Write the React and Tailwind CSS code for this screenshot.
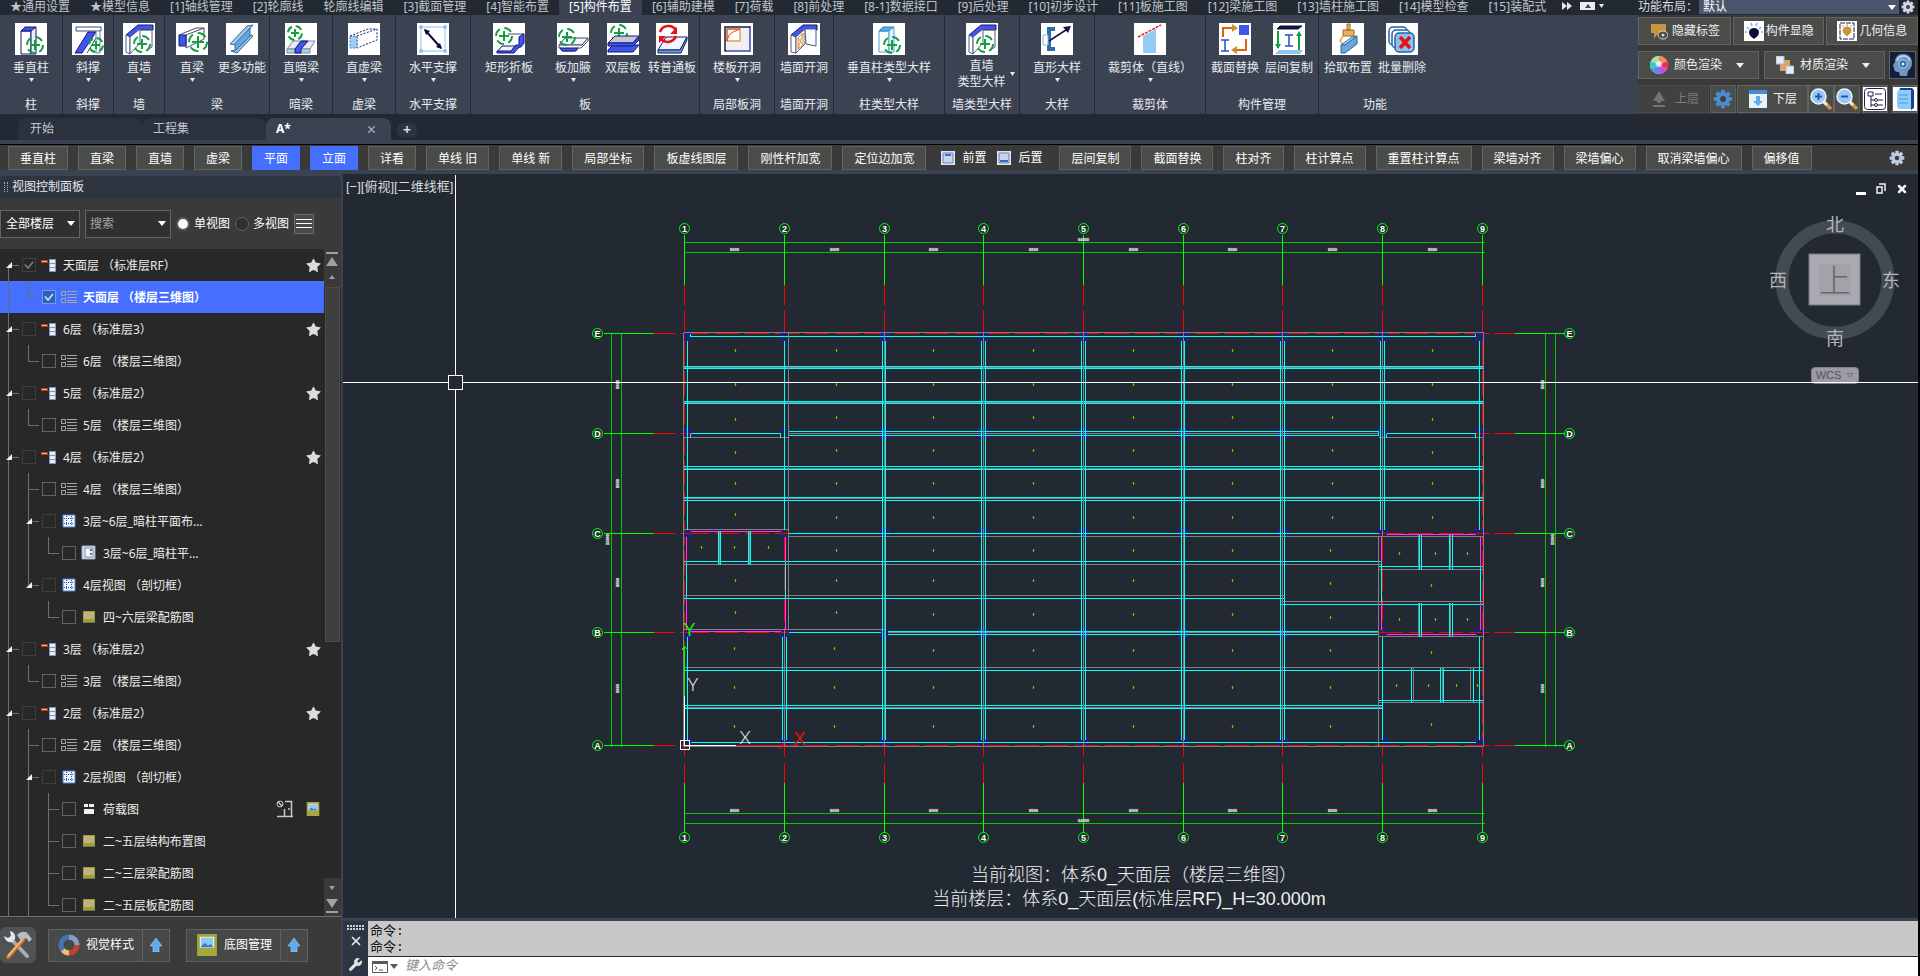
import React, { useState } from 'react';
import { Star, Wrench, X } from 'lucide-react';

/* ---------- ribbon icons (32 x 32) ---------- */

const Target = ({ x, y, r = 8 }) => (
  <g stroke="#12a03c" strokeWidth="2" fill="none">
    <circle cx={x} cy={y} r={r} strokeDasharray={`${r} ${r * 0.57}`} strokeDashoffset={r * 0.5 - 4} />
    <path d={`M${x - r + 3} ${y}H${x + r - 3}M${x} ${y - r + 3}V${y + r - 3}`} />
  </g>
);

const navy = '#14186e';
const blue = '#3f55f0';

const ICONS = {
  column: (
    <>
      <path d="M6 8h10v23H6z" fill="#fff" stroke={navy} />
      <path d="M6 8l4-4h11l-5 4z" fill={blue} stroke={navy} />
      <path d="M16 8l5-4v27h-5z" fill="#eef" stroke={navy} />
      <Target x={20} y={22} />
    </>
  ),
  brace: (
    <>
      <path d="M4 4h25v4H4z" fill="#fff" stroke="#444a70" />
      <path d="M16 9h8L10 30H3z" fill={blue} stroke={navy} />
      <path d="M24 9l3 1-12 20" fill="none" stroke="#444a70" />
      <path d="M24 8h4v22h-4z" fill="#f4f4ff" stroke="#8088a0" />
      <Target x={24} y={22} r={7} />
    </>
  ),
  wall: (
    <>
      <path d="M3 12L15 2h15v5H17L7 14z" fill={blue} stroke={navy} />
      <path d="M3 12l4 2v17l-4-2z" fill="#fff" stroke="#555c80" />
      <path d="M7 14L17 6v14L7 31z" fill="#fafaff" stroke="#555c80" />
      <path d="M17 6h12v18l-6 4" fill="none" stroke="#555c80" />
      <Target x={19} y={21} />
    </>
  ),
  beam: (
    <>
      <path d="M10 12L28 5v11l-18 9z" fill="#fff" stroke="#444a70" />
      <path d="M3 12h7v11H3z" fill={blue} stroke={navy} />
      <path d="M3 12L20 5h8" fill="none" stroke="#444a70" />
      <Target x={22} y={19} r={9} />
    </>
  ),
  more: (
    <>
      <path d="M4 21L21 3l6-1-17 20z" fill="#9cc8ee" stroke="#2f6ca0" />
      <path d="M9 21L24 5v9L9 28z" fill="#6aa6de" stroke="#2f6ca0" />
      <path d="M5 28l5-1 15-15 2 1-16 17z" fill="#8fc0ea" stroke="#2f6ca0" />
    </>
  ),
  hiddenBeam: (
    <>
      <path d="M2 26l6-8h22l-5 8z" fill="#e8eaf4" stroke="#8088a0" />
      <path d="M2 26h23v4H2z" fill="#a8d8e8" stroke="#8088a0" />
      <path d="M10 26l6-8h7l-7 8v4h-6z" fill={blue} stroke={navy} />
      <Target x={10} y={10} r={7} />
    </>
  ),
  virtualBeam: (
    <g stroke={navy} strokeDasharray="2 1.5">
      <path d="M9 13L29 6v11L9 25z" fill="#fff" />
      <path d="M2 13h7v12H2z" fill="#9cd0f6" stroke="#2f7cc0" />
      <path d="M2 13L20 6h9" fill="none" />
    </g>
  ),
  cross: (
    <>
      <path d="M4 4h24v24H4z" fill="none" stroke="#8cc4ee" />
      <g fill="#8cc4ee">
        <circle cx="4" cy="4" r="2" /><circle cx="28" cy="4" r="2" />
        <circle cx="4" cy="28" r="2" /><circle cx="28" cy="28" r="2" />
      </g>
      <path d="M8 7l16 18" stroke="#0a0a30" strokeWidth="2" />
      <path d="M7 6l6 2-4 4zM25 26l-6-2 4-4z" fill="#0a0a30" />
    </>
  ),
  foldSlab: (
    <>
      <path d="M15 11h16l-3 4v8l-4 3" fill="#fff" stroke="#444a70" />
      <path d="M9 23h13l-4 6H4z" fill="#eef0fa" stroke={navy} />
      <path d="M31 11v9l-3 4h-2l-5 6H4v-2h14l5-6h3v-8l4-3z" fill={blue} stroke={navy} />
      <Target x={11} y={13} />
    </>
  ),
  haunch: (
    <>
      <path d="M2 22l6-7h23l-6 7z" fill="#f4f6fc" stroke="#444a70" />
      <path d="M2 22h23l6-7v3l-7 7h-4l-3 3H6l-2-3H2z" fill="#fff" stroke="#444a70" />
      <path d="M3 25h18l-2 3H5z" fill={blue} stroke={navy} />
      <Target x={10} y={14} />
    </>
  ),
  doubleSlab: (
    <>
      <Target x={12} y={10} />
      <path d="M1 27l5-5h26l-6 7H1z" fill={blue} stroke={navy} />
      <path d="M1 20l7-7h24l-6 7z" fill="#c4c8d4" stroke={navy} />
      <path d="M1 20h25l6-7v4l-6 6H1z" fill={blue} stroke={navy} />
    </>
  ),
  convert: (
    <>
      <path d="M2 27l8-13h21l-7 13z" fill="#f4f6ff" stroke={navy} />
      <path d="M2 27h22l7-13v3l-6 13H2z" fill="#6aa6de" stroke={navy} />
      <path d="M4 9a9 9 0 0 1 16-2M20 13a9 9 0 0 1-15 3" fill="none" stroke="#e81010" strokeWidth="2.5" />
      <path d="M21 4v7h-7zM3 20v-7h7z" fill="#e81010" />
    </>
  ),
  slabHole: (
    <>
      <path d="M4 4h25v24H4z" fill="#f0f0f0" stroke="#1a1c48" strokeWidth="1.5" />
      <path d="M5 28h24V5" fill="none" stroke="#6c70c0" strokeWidth="2" />
      <path d="M6 6h13v12H6z" fill="#fff" stroke="#e0a060" strokeWidth="1.5" />
      <path d="M6 18V6h13l-7 3-4 3z" fill="none" stroke="#e05020" />
    </>
  ),
  wallHole: (
    <>
      <path d="M3 12L15 2h14v5H17L8 14z" fill={blue} stroke={navy} />
      <path d="M3 12l5 2v16l-5-1z" fill="#fff" stroke="#555c80" />
      <path d="M8 14L17 6v15L8 30z" fill="#fff" stroke="#555c80" />
      <path d="M10 15l5-5v12l-5 4zM10 15l5 7M15 10l-5 16" fill="none" stroke="#d89040" />
      <path d="M17 6h11v17l-10-2z" fill="#fafaff" stroke="#555c80" />
    </>
  ),
  columnType: (
    <>
      <path d="M6 8h10v21H6z" fill="#fff" stroke="#50a0d0" />
      <path d="M6 8l4-4h11l-5 4z" fill="#50b0e8" stroke="#3080b0" />
      <path d="M16 8l5-4v25h-5z" fill="#e4f2fc" stroke="#50a0d0" />
      <Target x={19} y={22} />
    </>
  ),
  straight: (
    <>
      <path d="M14 4H6v24h8v-4h-4V8h4z" fill="#2c6ca8" />
      <path d="M2 12h5v10H2z" fill="#fff" stroke="#8cb8dc" />
      <path d="M8 18L28 5" stroke="#14143c" strokeWidth="1.5" />
      <path d="M30 3l-8 1 5 6z" fill="#14143c" />
    </>
  ),
  clip: (
    <>
      <path d="M9 13L22 6v24H9z" fill="#94ccf4" />
      <path d="M4 14L27 2" stroke="#e02020" strokeWidth="1.5" strokeDasharray="3 1" />
    </>
  ),
  replace: (
    <>
      <path d="M4 14V5h10" fill="none" stroke="#e06010" strokeWidth="2" />
      <path d="M13 1l6 4-6 4z" fill="#c89030" />
      <path d="M20 2h10v10H20z" fill={blue} />
      <path d="M2 17h8M2 28h8M6 17v11" stroke="#2050d0" strokeWidth="1.5" />
      <path d="M27 16v11H17" fill="none" stroke="#e06010" strokeWidth="2" />
      <path d="M18 23l-6 4 6 4z" fill="#c89030" />
    </>
  ),
  floorCopy: (
    <>
      <path d="M4 6l3-3h22l-4 3z" fill="#10143c" stroke="#10143c" />
      <path d="M2 31l4-4h24l-3 4z" fill="#8cc8f0" />
      <path d="M5 8v17M26 10v17" stroke="#12a03c" strokeWidth="2" />
      <path d="M2 21h6l-3 5zM23 13h6l-3-5z" fill="#12a03c" />
      <path d="M12 12h8M12 23h8M16 12v11" stroke="#2050d0" strokeWidth="1.5" />
    </>
  ),
  pick: (
    <>
      <path d="M15 1h3v6h-3zM11 7h11v6H11z" fill="#e8b060" stroke="#a06c18" />
      <path d="M11 13l-3 5 4 4M22 13l3 6-4 3" fill="none" stroke="#e8a848" strokeWidth="1.5" />
      <path d="M9 22l11-8 5-1-12 9z" fill="#b4d8f4" stroke="#2f6ca0" />
      <path d="M9 22h4l12-9v8l-12 9H9z" fill="#6aa6de" stroke="#2f6ca0" />
    </>
  ),
  batchDelete: (
    <g fill="#fff" stroke="#2464a4" strokeWidth="1.5">
      <rect x="3" y="4" width="18" height="18" rx="4" />
      <rect x="6" y="7" width="18" height="18" rx="4" />
      <rect x="9" y="10" width="19" height="19" rx="4" fill="#8cc0ee" />
      <path d="M14 14l10 11M24 14L14 25" stroke="#e81010" strokeWidth="3.5" />
    </g>
  ),
};

const RibbonIcon = ({ name }) => (
  <svg viewBox="0 0 32 32" className="w-8 h-8 bg-white">{ICONS[name]}</svg>
);

const Caret = ({ className = 'w-[5px] h-[4px]' }) => (
  <svg viewBox="0 0 10 6" preserveAspectRatio="none" className={className}>
    <path d="M0 0h10L5 6z" fill="currentColor" />
  </svg>
);

/* ---------- data ---------- */

const ribbonTabs = [
  '★通用设置', '★模型信息', '[1]轴线管理', '[2]轮廓线', '轮廓线编辑', '[3]截面管理', '[4]智能布置',
  '[5]构件布置', '[6]辅助建模', '[7]荷载', '[8]前处理', '[8-1]数据接口', '[9]后处理', '[10]初步设计',
  '[11]板施工图', '[12]梁施工图', '[13]墙柱施工图', '[14]模型检查', '[15]装配式',
];

const ribbonGroups = [
  { title: '柱', w: 'w-[63px]', items: [['column', '垂直柱', 'w-[60px]', true]] },
  { title: '斜撑', w: 'w-[51px]', items: [['brace', '斜撑', 'w-[50px]', true]] },
  { title: '墙', w: 'w-[51px]', items: [['wall', '直墙', 'w-[50px]', true]] },
  { title: '梁', w: 'w-[105px]', items: [['beam', '直梁', 'w-[50px]', true], ['more', '更多功能', 'w-[50px]', false]] },
  { title: '暗梁', w: 'w-[63px]', items: [['hiddenBeam', '直暗梁', 'w-[60px]', true]] },
  { title: '虚梁', w: 'w-[63px]', items: [['virtualBeam', '直虚梁', 'w-[60px]', true]] },
  { title: '水平支撑', w: 'w-[75px]', items: [['cross', '水平支撑', 'w-[70px]', true]] },
  {
    title: '板',
    w: 'w-[229px]',
    items: [
      ['foldSlab', '矩形折板', 'w-[74px]', true],
      ['haunch', '板加腋', 'w-[54px]', true],
      ['doubleSlab', '双层板', 'w-[46px]', false],
      ['convert', '转普通板', 'w-[52px]', false],
    ],
  },
  { title: '局部板洞', w: 'w-[75px]', items: [['slabHole', '楼板开洞', 'w-[70px]', true]] },
  { title: '墙面开洞', w: 'w-[59px]', items: [['wallHole', '墙面开洞', 'w-[54px]', false]] },
  { title: '柱类型大样', w: 'w-[111px]', items: [['columnType', '垂直柱类型大样', 'w-[100px]', true]] },
  { title: '墙类型大样', w: 'w-[75px]', items: [['wall', '直墙', 'w-[70px]', true, '类型大样']] },
  { title: '大样', w: 'w-[75px]', items: [['straight', '直形大样', 'w-[70px]', true]] },
  { title: '裁剪体', w: 'w-[111px]', items: [['clip', '裁剪体（直线）', 'w-[100px]', true]] },
  { title: '构件管理', w: 'w-[113px]', items: [['replace', '截面替换', 'w-[54px]', false], ['floorCopy', '层间复制', 'w-[54px]', false]] },
  { title: '功能', w: 'w-[112px]', last: true, items: [['pick', '拾取布置', 'w-[54px]', false], ['batchDelete', '批量删除', 'w-[54px]', false]] },
];

const quickLeft = [
  '垂直柱', '直梁', '直墙', '虚梁', '平面', '立面', '详看', '单线 旧', '单线 新', '局部坐标',
  '板虚线图层', '刚性杆加宽', '定位边加宽',
];
const quickRight = [
  '层间复制', '截面替换', '柱对齐', '柱计算点', '重置柱计算点', '梁墙对齐', '梁墙偏心', '取消梁墙偏心', '偏移值',
];

// cells: how the guide lines run in each 20px indent column
const treeRows = [
  { cells: ['start'], open: true, icon: 'floor', text: '天面层 （标准层RF）', dim: true, checked: true, star: true },
  { cells: ['pass', 'end'], icon: 'list', text: '天面层 （楼层三维图）', checked: true, selected: true },
  { cells: ['tee'], open: true, icon: 'floor', text: '6层 （标准层3）', dim: true, star: true },
  { cells: ['pass', 'end'], icon: 'list', text: '6层 （楼层三维图）' },
  { cells: ['tee'], open: true, icon: 'floor', text: '5层 （标准层2）', dim: true, star: true },
  { cells: ['pass', 'end'], icon: 'list', text: '5层 （楼层三维图）' },
  { cells: ['tee'], open: true, icon: 'floor', text: '4层 （标准层2）', dim: true, star: true },
  { cells: ['pass', 'tee'], icon: 'list', text: '4层 （楼层三维图）' },
  { cells: ['pass', 'tee'], open: true, icon: 'grid', text: '3层~6层_暗柱平面布...', dim: true },
  { cells: ['pass', 'pass', 'end'], icon: 'plan', text: '3层~6层_暗柱平...' },
  { cells: ['pass', 'end'], open: true, icon: 'grid', text: '4层视图 （剖切框）', dim: true },
  { cells: ['pass', 'none', 'end'], icon: 'image', text: '四~六层梁配筋图' },
  { cells: ['tee'], open: true, icon: 'floor', text: '3层 （标准层2）', dim: true, star: true },
  { cells: ['pass', 'end'], icon: 'list', text: '3层 （楼层三维图）' },
  { cells: ['tee'], open: true, icon: 'floor', text: '2层 （标准层2）', dim: true, star: true },
  { cells: ['pass', 'tee'], icon: 'list', text: '2层 （楼层三维图）' },
  { cells: ['pass', 'tee'], open: true, icon: 'grid', text: '2层视图 （剖切框）', dim: true },
  { cells: ['pass', 'pass', 'tee'], icon: 'load', text: '荷载图', tools: true },
  { cells: ['pass', 'pass', 'tee'], icon: 'image', text: '二~五层结构布置图' },
  { cells: ['pass', 'pass', 'tee'], icon: 'image', text: '二~三层梁配筋图' },
  { cells: ['pass', 'pass', 'end'], icon: 'image', text: '二~五层板配筋图' },
];

/* ---------- header ---------- */

const RibbonItem = ({ item }) => {
  const [icon, label, width, caret, second] = item;
  return (
    <button className={`${width} flex flex-col items-center text-[#e8eaee] whitespace-nowrap`}>
      <RibbonIcon name={icon} />
      {second ? (
        <span className="flex items-center gap-1 pl-2 leading-4 pt-[3px]">
          <span className="flex flex-col items-center">
            <span>{label}</span>
            <span>{second}</span>
          </span>
          <Caret />
        </span>
      ) : (
        <>
          <span className="leading-4 mt-[5px]">{label}</span>
          {caret && <Caret className="w-[5px] h-[4px] mt-[2px]" />}
        </>
      )}
    </button>
  );
};

const Ribbon = () => (
  <div className="flex-1 min-w-0 flex flex-col">
    <nav className="h-[15px] flex items-start">
      {ribbonTabs.map((tab) => (
        <button
          key={tab}
          className={`h-[15px] px-[10px] leading-[14px] flex items-start whitespace-nowrap ${
            tab.startsWith('[5]') ? 'bg-[#3b4353] text-white' : 'text-[#c0c4ca]'
          }`}
        >
          {tab}
        </button>
      ))}
      <div className="flex items-center gap-2 h-3 pl-[6px]">
        <svg viewBox="0 0 10 8" className="w-[10px] h-2"><path d="M0 0l5 4-5 4zM5 0l5 4-5 4z" fill="#e8e8e8" /></svg>
        <button aria-label="折叠功能区" className="w-[15px] h-2 bg-[#ececec] flex items-center justify-center">
          <svg viewBox="0 0 6 4" className="w-[6px] h-1"><path d="M0 4h6L3 0z" fill="#444" /></svg>
        </button>
        <span className="text-[#e8e8e8] flex -ml-1"><Caret /></span>
      </div>
    </nav>
    <div className="flex-1 flex bg-[#3b4353]">
      {ribbonGroups.map((g) => (
        <section key={g.title} className={`${g.w} flex flex-col py-px ${g.last ? '' : 'border-r border-[#232a35]'}`}>
          <div className="flex-1 flex justify-center items-start pt-[7px]">
            {g.items.map((item) => <RibbonItem key={item[1]} item={item} />)}
          </div>
          <h2 className="text-center leading-4 text-[#e8eaee]">{g.title}</h2>
        </section>
      ))}
    </div>
  </div>
);

const panelButton = 'h-7 border border-[#626462] bg-[#4b4d4b] text-[#f0f0f0] flex items-center whitespace-nowrap';

const GearIcon = ({ className }) => (
  <svg viewBox="0 0 24 24" className={className}>
    <g fill="currentColor">
      {[0, 45, 90, 135].map((a) => (
        <rect key={a} x="9.5" y="1" width="5" height="22" rx="1" transform={`rotate(${a} 12 12)`} />
      ))}
      <circle cx="12" cy="12" r="8" />
    </g>
    <circle cx="12" cy="12" r="3.5" fill="#3c3e42" />
  </svg>
);

const Magnifier = ({ minus }) => (
  <svg viewBox="0 0 24 24" className="w-6 h-6">
    <path d="M15 15l7 7" stroke="#d89040" strokeWidth="3.5" />
    <path d="M14 14l4 4" stroke="#e8e8e8" strokeWidth="3" />
    <circle cx="9.5" cy="9.5" r="7.5" fill="#9cc8f4" stroke="#eef4fa" strokeWidth="1.5" />
    <path d={minus ? 'M6 9.5h7' : 'M6 9.5h7M9.5 6v7'} stroke="#1c5cb0" strokeWidth="2" />
  </svg>
);

const SidePanel = () => (
  <div className="w-[280px] shrink-0 flex flex-col bg-[#3a3a3a]">
    <div className="h-[15px] bg-[#222933] flex">
      <label htmlFor="layout" className="leading-[14px] text-[#d8dade] w-[61px] whitespace-nowrap">功能布局：</label>
      <div className="grid w-[200px] h-[14px] bg-[#4a566c] items-center">
        <select id="layout" className="appearance-none col-start-1 row-start-1 w-full h-[14px] leading-[14px] pl-1 text-white">
          <option>默认</option>
        </select>
        <span className="col-start-1 row-start-1 justify-self-end pr-[3px] text-white pointer-events-none">
          <Caret className="w-2 h-[5px]" />
        </span>
      </div>
      <GearIcon className="w-[14px] h-[14px] ml-[2px] text-[#d0d8e8]" />
    </div>
    <div className="flex flex-col gap-[6px] pt-[2px]">
      <div className="flex gap-[2px]">
        <button className={`${panelButton} flex-1 pl-[11px] gap-1`}>
          <svg viewBox="0 0 18 18" className="w-[18px] h-[18px]">
            <path d="M1 2h15v9H8l-4 6v-6H1z" fill="#c8963c" />
            <ellipse cx="13" cy="13" rx="5" ry="4" fill="#4b4d4b" stroke="#d8d8d8" />
            <circle cx="13" cy="13" r="1.5" fill="#d8d8d8" />
          </svg>
          隐藏标签
        </button>
        <button className={`${panelButton} flex-1 pl-[10px] gap-[2px]`}>
          <svg viewBox="0 0 20 20" className="w-5 h-5 bg-white">
            <path d="M10 18c-2-2-5-3-5-7a5 4 0 0 1 10 0c0 4-3 5-5 7z" fill="#0c0c34" />
            <path d="M3 6l2 2M7 2l1 3M13 2l-1 3M17 6l-2 2M1 11h2M17 11h2" stroke="#78b8e8" strokeWidth="1.5" />
          </svg>
          构件显隐
        </button>
        <button className={`${panelButton} flex-1 pl-[10px] gap-[2px]`}>
          <svg viewBox="0 0 20 20" className="w-5 h-5 bg-white">
            <path d="M3 2h14v16H3z" fill="none" stroke="#202048" strokeDasharray="5 1" />
            <path d="M10 15c-2-2-4-3-4-6a4 3 0 0 1 8 0c0 3-2 4-4 6zM5 4l2 2M10 3v3M15 4l-2 2" fill="#c8963c" stroke="#c8963c" />
          </svg>
          几何信息
        </button>
      </div>
      <div className="flex">
        <button className={`${panelButton} w-[121px] pl-[11px]`}>
          <svg viewBox="0 0 18 18" className="w-[18px] h-[18px] mr-[6px]">
            <circle cx="9" cy="9" r="9" fill="#f0f0f0" />
            <path d="M9 9V0a9 9 0 0 1 8 5z" fill="#f08858" /><path d="M9 9l8-4a9 9 0 0 1 0 8z" fill="#f02c50" />
            <path d="M9 9l8 4a9 9 0 0 1-8 5z" fill="#c050e0" /><path d="M9 9v9a9 9 0 0 1-8-5z" fill="#5090f0" />
            <path d="M9 9l-8 4a9 9 0 0 1 0-8z" fill="#38c8c0" /><path d="M9 9L1 5a9 9 0 0 1 8-5z" fill="#a8e0a0" />
            <circle cx="9" cy="8" r="3" fill="#fff" opacity=".7" />
          </svg>
          颜色渲染
          <Caret className="w-2 h-[5px] ml-[14px]" />
        </button>
        <button className={`${panelButton} w-[121px] ml-[5px] pl-[11px]`}>
          <svg viewBox="0 0 18 18" className="w-[18px] h-[18px] mr-[6px]">
            <path d="M4 4h10v11H4z" fill="#e0a45c" /><path d="M0 0h8v8H0zM10 10h8v8h-8z" fill="#e4ecf8" stroke="#a8b8d0" />
          </svg>
          材质渲染
          <Caret className="w-2 h-[5px] ml-[14px]" />
        </button>
        <button aria-label="视觉" className="ml-1 w-[27px] h-7 border border-[#626462] bg-[#141e3c] flex items-center justify-center">
          <svg viewBox="0 0 24 24" className="w-6 h-6">
            <path d="M12 1c6 0 9 4 9 9s-3 7-4 8l-1 5H9l-1-4c-3 0-5-1-5-4l-1-3 2-3c0-5 3-8 8-8z" fill="#7498bc" />
            <path d="M6 8c1-4 4-5 7-5s5 2 6 5" fill="none" stroke="#c4dcf0" strokeWidth="1.5" />
            <circle cx="12" cy="11" r="4" fill="#2c64a8" stroke="#8cc0e8" strokeWidth="1.5" />
            <circle cx="12" cy="11" r="1.5" fill="#d8f0ff" />
          </svg>
        </button>
      </div>
      <div className="flex">
        <button disabled className="w-[71px] h-7 border border-[#484848] bg-[#414141] text-[#7c7c7c] flex items-center pl-[14px] gap-[10px]">
          <svg viewBox="0 0 12 16" className="w-3 h-4">
            <path d="M6 0l6 10H8v2H4v-2H0zM0 14h12v2H0z" fill="#70747a" />
          </svg>
          上层
        </button>
        <button aria-label="设置" className="w-[26px] h-7 ml-px border border-[#5c5c5c] bg-[#4b4d4b] flex items-center justify-center">
          <GearIcon className="w-5 h-5 text-[#4c8ccc]" />
        </button>
        <button className={`${panelButton} w-[71px] ml-px pl-[11px] gap-[6px]`}>
          <svg viewBox="0 0 18 18" className="w-[18px] h-[18px]">
            <path d="M0 0h18v18H0z" fill="#e8f0f8" /><path d="M0 0h18v4H0z" fill="#4c8ccc" />
            <path d="M7 6h4v5h3l-5 5-5-5h3z" fill="#5cacec" />
          </svg>
          下层
        </button>
        <button aria-label="放大" className={`${panelButton} w-[26px] justify-center`}><Magnifier /></button>
        <button aria-label="缩小" className={`${panelButton} w-[26px] justify-center`}><Magnifier minus /></button>
        <button aria-label="列表" className={`${panelButton} w-[26px] ml-[2px] justify-center`}>
          <svg viewBox="0 0 24 24" className="w-6 h-6 bg-white">
            <rect x="1.5" y="1.5" width="21" height="21" rx="3" fill="none" stroke="#202048" />
            <path d="M5 5h5v4H5zM12 7h7M8 9v11M8 13h4M8 18h3M15 13h5M15 18h5" fill="none" stroke="#202048" />
            <circle cx="13" cy="13" r="1.5" fill="none" stroke="#202048" /><circle cx="13" cy="18" r="1.5" fill="none" stroke="#202048" />
          </svg>
        </button>
        <button aria-label="文档" className={`${panelButton} w-[26px] ml-1 justify-center`}>
          <svg viewBox="0 0 24 24" className="w-6 h-6 bg-white">
            <path d="M7 1h12l2 2v18l-3 2V4H6z" fill="#1c3c9c" />
            <path d="M6 3h12v19H6l-2-2V5z" fill="#8cccf8" />
            <path d="M6 8h9M6 12h9M6 16h9" stroke="#4c98d8" />
          </svg>
        </button>
      </div>
    </div>
  </div>
);

const FileTabs = () => (
  <div className="h-[26px] flex items-end pl-[18px] text-[#c4c8ce] shrink-0">
    <button className="w-[124px] h-[22px] rounded-t-[8px] bg-[#2b323e] pl-3 text-left">开始</button>
    <button className="w-[124px] h-[22px] rounded-t-[8px] bg-[#2b323e] pl-[11px] text-left">工程集</button>
    <div className="w-[125px] h-[22px] rounded-t-[8px] bg-[#3b4353] pl-[10px] pr-[14px] flex items-center justify-between">
      <button className="font-bold text-white">A*</button>
      <button aria-label="关闭"><X size={11} strokeWidth={3} className="text-[#a8acb4]" /></button>
    </div>
    <button aria-label="新建" className="ml-[6px] mb-[3px] w-[20px] h-[14px] rounded-md bg-[#2e3541] text-[#d8dade] font-bold text-sm leading-[14px]">+</button>
  </div>
);

const QuickButton = ({ label }) => (
  <button
    className={`h-6 px-[11px] pt-px border whitespace-nowrap text-white ${
      label === '平面' || label === '立面' ? 'bg-[#456fff] border-[#456fff]' : 'bg-[#4a4c4a] border-[#626462]'
    }`}
  >
    {label}
  </button>
);

const LayerIcon = ({ back }) => (
  <svg viewBox="0 0 16 16" className="w-4 h-4">
    <path d="M1 1h14v14H1z" fill="#dfe6f4" /><path d="M3 3h10v10H3z" fill="#c8d4ec" stroke="#6484bc" />
    <path d={back ? 'M4 10h8v2H4z' : 'M5 4h6v2H5z'} fill="#3c6cb4" />
  </svg>
);

const QuickBar = () => (
  <div className="h-[25px] shrink-0 flex items-end gap-[10px] pl-2 pr-[13px] bg-[#3a3a3a]">
    {quickLeft.map((label) => <QuickButton key={label} label={label} />)}
    <div className="h-6 flex items-center text-white pl-1 pr-[7px]">
      <button className="flex items-center gap-[6px]"><LayerIcon />前置</button>
      <button className="flex items-center gap-[6px] ml-[10px]"><LayerIcon back />后置</button>
    </div>
    {quickRight.map((label) => <QuickButton key={label} label={label} />)}
    <button aria-label="工具栏设置" className="ml-auto mb-1"><GearIcon className="w-4 h-4 text-[#bccce4]" /></button>
  </div>
);

/* ---------- view tree ---------- */

const guidePaths = {
  none: '',
  pass: 'M8.5 0v32',
  start: 'M8.5 16v16M8 16.5h11',
  tee: 'M8.5 0v32M8 16.5h11',
  end: 'M8.5 0v17M8 16.5h11',
};

const Guide = ({ type, arrow }) => (
  <svg viewBox="0 0 20 32" className="w-5 h-8 shrink-0">
    <path d={guidePaths[type]} stroke="#6e6e6e" />
    {arrow && <path d="M12 13v6H6z" fill="#f0f0f0" />}
  </svg>
);

const TreeIcon = ({ name }) => (
  <svg viewBox="0 0 16 16" className="w-4 h-4 shrink-0">
    {name === 'floor' && (
      <>
        <path d="M0 3h7v3H0z" fill="#b04030" /><path d="M1 4h5v1H1z" fill="#f0c080" />
        <path d="M8.5 2.5h6v12h-6z" fill="#e8eef6" stroke="#8898b8" /><path d="M9 6.5h5M9 10.5h5" stroke="#8090b0" />
      </>
    )}
    {name === 'list' && (
      <path d="M.5 2.5h4v4h-4zM.5 9.5h4v4h-4zM6 2.5h10M6 5.5h10M6 8.5h10M6 11.5h10M6 13.5h10" fill="none" stroke="#a8a8a8" />
    )}
    {name === 'grid' && (
      <>
        <path d="M2 2h12v12H2z" fill="#eef4ff" stroke="#4884d8" />
        <path d="M3 5.5h10M3 10.5h10M5.5 3v10M10.5 3v10" stroke="#3c50b0" strokeDasharray="1 1" />
      </>
    )}
    {name === 'plan' && (
      <>
        <path d="M1 1h13v13H1z" fill="#d8e0ec" stroke="#98a8c4" /><path d="M4 3h8v9H4z" fill="#f8f8f8" stroke="#8090a8" />
        <path d="M9 4h2v2H9z" fill="#2c6cb4" /><path d="M9 8h2v2H9z" fill="#b06030" />
      </>
    )}
    {name === 'image' && (
      <>
        <path d="M2 2h12v12H2z" fill="#9ca038" /><path d="M3 3h10v7H3z" fill="#c4b084" />
        <path d="M2 13h12v1H2z" fill="#5c8048" />
      </>
    )}
    {name === 'load' && <path d="M3 3h4v3H3zM8 3h5v3H8zM3 8h10v5H3z" fill="#f0f0f0" />}
  </svg>
);

const ImageIcon = ({ className }) => (
  <svg viewBox="0 0 20 20" className={className}>
    <path d="M1 0h18v20H1z" fill="#a4a83c" />
    <path d="M4 3h12v9H4z" fill="#8cc8f4" stroke="#e8f0f8" />
    <path d="M4 12l4-4 3 3 2-2 3 3z" fill="#3878b8" />
  </svg>
);

const TreeRow = ({ row }) => {
  const [checked, setChecked] = useState(!!row.checked);
  return (
    <li className={`h-8 flex items-center shrink-0 ${row.selected ? 'bg-[#456fff] font-bold text-white' : 'text-[#ececec]'}`}>
      {row.cells.map((type, i) => (
        <Guide key={i} type={type} arrow={row.open && i === row.cells.length - 1} />
      ))}
      <label className="flex items-center ml-[2px] whitespace-pre">
        <span className="grid">
          <input
            type="checkbox"
            checked={checked}
            onChange={() => setChecked(!checked)}
            className={`appearance-none col-start-1 row-start-1 w-[14px] h-[14px] border ${
              row.selected ? 'bg-[#3060b8] border-[#6c9cf0]' : row.dim ? 'border-[#3e3e3e]' : 'border-[#646464]'
            }`}
          />
          {checked && (
            <svg viewBox="0 0 14 14" className="col-start-1 row-start-1 w-[14px] h-[14px] pointer-events-none">
              <path d="M3 6.5l3 3.5 5-6" fill="none" strokeWidth="1.5" stroke={row.selected ? '#d0e4ff' : '#808080'} />
            </svg>
          )}
        </span>
        <span className="ml-[5px] mr-[6px]"><TreeIcon name={row.icon} /></span>
        <span className="pt-[2px]">{row.text}</span>
      </label>
      {row.star && <Star size={17} fill="#dcdcdc" strokeWidth={0} className="ml-auto mr-[2px]" />}
      {row.tools && (
        <span className="ml-auto mr-1 flex items-center gap-3">
          <svg viewBox="0 0 18 18" className="w-[18px] h-[18px]">
            <circle cx="4" cy="4" r="3" fill="none" stroke="#c8c8c8" />
            <path d="M2 2l4 4M1 16.5h16M8.5 9v8M9 1.5h6.5V16M12 9h2" fill="none" stroke="#c8c8c8" strokeWidth="1.5" />
          </svg>
          <ImageIcon className="w-[14px] h-[14px]" />
        </span>
      )}
    </li>
  );
};

const UpArrow = () => (
  <svg viewBox="0 0 12 14" className="w-3 h-[14px]">
    <path d="M6 0l6 8H9v6H3V8H0z" fill="#5cacf0" stroke="#b4dcfc" strokeWidth=".5" />
  </svg>
);

const SplitButton = ({ icon, label }) => (
  <div className="flex h-[33px] border border-[#5e5f60] bg-[#474848] text-white">
    <button className="w-[93px] flex items-center pl-[9px] gap-[6px] whitespace-nowrap">{icon}{label}</button>
    <button aria-label={`${label}选项`} className="w-[27px] border-l border-[#5e5f60] flex items-center justify-center"><UpArrow /></button>
  </div>
);

const ViewPanel = () => {
  const [mode, setMode] = useState('单视图');
  return (
    <aside className="w-[341px] shrink-0 flex flex-col bg-[#3a3a3a]">
      <header className="h-6 shrink-0 pt-[2px] bg-[#3b4353]">
        <div className="h-[22px] rounded-t-sm bg-[#2d3440] flex items-center gap-1 pl-1 text-[#e4e6ea]">
          <span className="w-[4px] h-[10px] border-x border-dotted border-[#a8acb4]" />
          <h1>视图控制面板</h1>
        </div>
      </header>
      <div className="h-[51px] shrink-0 flex items-center text-white">
        <div className="grid items-center w-20 h-7 border border-[#646464] bg-[#303030]">
          <select aria-label="楼层" className="appearance-none col-start-1 row-start-1 w-full h-[26px] pl-[5px]">
            <option>全部楼层</option>
          </select>
          <span className="col-start-1 row-start-1 justify-self-end pr-1 pointer-events-none"><Caret className="w-2 h-[5px]" /></span>
        </div>
        <div className="flex items-center w-[86px] h-7 ml-[5px] pr-1 border border-[#646464] bg-[#303030]">
          <input aria-label="搜索" placeholder="搜索" className="flex-1 min-w-0 pl-1 outline-none placeholder:text-[#a4a4a4]" />
          <Caret className="w-2 h-[5px]" />
        </div>
        {['单视图', '多视图'].map((m) => (
          <label key={m} className="flex items-center gap-1 ml-[5px]">
            <input
              type="radio"
              name="mode"
              checked={mode === m}
              onChange={() => setMode(m)}
              className="appearance-none w-[14px] h-[14px] rounded-full border border-[#626262] bg-[#303030] checked:bg-white checked:border-2 checked:border-[#545454]"
            />
            {m}
          </label>
        ))}
        <button aria-label="菜单" className="ml-[5px] w-5 h-5 border border-[#6a6a6a] bg-[#4a4a4a] flex flex-col items-center justify-center gap-[3px]">
          <span className="w-4 h-px bg-white" /><span className="w-4 h-px bg-white" /><span className="w-4 h-px bg-white" />
        </button>
      </div>
      <div className="flex-1 min-h-0 flex bg-[#282828]">
        <ul className="flex-1 overflow-hidden flex flex-col">
          {treeRows.map((row, i) => <TreeRow key={i} row={row} />)}
        </ul>
        <div className="w-[17px] flex flex-col text-[#a0a0a0]">
          <svg viewBox="0 0 17 38" className="w-[17px] h-[38px] bg-[#3a3a3a]">
            <path d="M2 3h12v2H2zM2 17h12l-6-9zM5 30h6l-3-4z" fill="currentColor" />
          </svg>
          <div className="flex-[3] mx-px border border-[#4c4c4c] bg-[#3e3e3e]" />
          <div className="flex-[2]" />
          <svg viewBox="0 0 17 38" className="w-[17px] h-[38px] bg-[#3a3a3a]">
            <path d="M5 8h6l-3 4zM2 21h12l-6 9zM2 33h12v2H2z" fill="currentColor" />
          </svg>
        </div>
      </div>
      <footer className="h-[60px] shrink-0 border-t border-[#707070] flex items-center pb-[3px] bg-[#3a3a3a]">
        <button aria-label="工具" className="w-9 h-9 rounded-md bg-[#505254] flex items-center justify-center">
          <svg viewBox="0 0 30 30" className="w-[30px] h-[30px]">
            <path d="M8 9l16 17" stroke="#a8acb4" strokeWidth="4" strokeLinecap="round" />
            <path d="M7 1c4 1 6 4 5 8l-3 3c-4 1-7-2-8-6l4 2 3-2z" fill="#e4e8ee" />
            <path d="M20 10L5 27" stroke="#d87830" strokeWidth="4" strokeLinecap="round" />
            <path d="M19 10L5 26" stroke="#f8c880" strokeWidth="1.5" />
            <path d="M14 5c4-4 9-4 11-1l4 5-3 3-3-4-5 3-2-3z" fill="#b8bcc4" />
          </svg>
        </button>
        <div className="ml-3 flex gap-4">
          <SplitButton
            label="视觉样式"
            icon={
              <svg viewBox="0 0 22 22" className="w-[22px] h-[22px]">
                <g fill="none" strokeWidth="5">
                  <circle cx="11" cy="11" r="8" stroke="#4474b4" />
                  <path d="M11 3a8 8 0 0 1 8 8" stroke="#8c9cbc" />
                  <path d="M19 11a8 8 0 0 1-8 8" stroke="#c8402c" />
                  <path d="M11 19a8 8 0 0 1-6-3" stroke="#e8c070" />
                </g>
              </svg>
            }
          />
          <SplitButton label="底图管理" icon={<ImageIcon className="w-[22px] h-[22px]" />} />
        </div>
      </footer>
    </aside>
  );
};

/* ---------- drawing ---------- */

const AX = [684, 784, 884, 983, 1083, 1183, 1282, 1382, 1482];
const AY = [['E', 333], ['D', 433], ['C', 533], ['B', 632], ['A', 745]];
const CY = '#00ffff';
const GR = '#808080';
const MG = '#ff32ff';

// [color, y, x1, x2]
const hLines = [
  [CY, 336, 690, 1475],
  [CY, 366, 683, 1483], [GR, 367, 683, 1483], [CY, 368, 683, 1483],
  [CY, 401, 683, 1483], [GR, 402, 683, 1483], [CY, 403, 683, 1483],
  [CY, 433, 690, 780], [GR, 437, 683, 788],
  [CY, 431, 788, 1378], [GR, 433, 788, 1378], [CY, 435, 788, 1378],
  [CY, 433, 1386, 1475], [GR, 437, 1378, 1483],
  [CY, 466, 683, 1483], [GR, 468, 683, 1483], [CY, 469, 683, 1483],
  [CY, 497, 683, 1483], [GR, 498, 683, 1483], [CY, 500, 683, 1483],
  [GR, 529, 683, 788], [MG, 531, 690, 780],
  [CY, 533, 788, 1378], [GR, 536, 788, 1483], [MG, 534, 1386, 1475],
  [CY, 561, 683, 1381], [GR, 564, 683, 1381],
  [CY, 566, 1378, 1483], [GR, 569, 1378, 1483],
  [GR, 595, 683, 1284], [CY, 598, 683, 1284],
  [GR, 601, 1280, 1483], [CY, 604, 1280, 1483],
  [GR, 629, 683, 884], [MG, 631, 690, 780], [CY, 632, 788, 880],
  [CY, 631, 887, 1378], [GR, 632, 887, 1378], [CY, 634, 887, 1378],
  [MG, 634, 1386, 1475], [GR, 636, 1378, 1483],
  [GR, 667, 683, 1483], [CY, 670, 683, 1483],
  [CY, 700, 1378, 1483], [GR, 702, 1378, 1483],
  [CY, 705, 683, 1382], [GR, 707, 683, 1382], [CY, 708, 683, 1382],
  [CY, 742, 690, 1475],
  [GR, 332, 683, 1483], [GR, 746, 683, 1483],
];

// [color, x, y1, y2]
const vLines = [
  [CY, 690, 333, 336], [CY, 1475, 333, 336], [CY, 690, 433, 437], [CY, 780, 433, 437],
  [CY, 1386, 433, 437], [CY, 1475, 433, 437], [CY, 1378, 431, 435],
  [CY, 687, 340, 529], [MG, 686, 536, 561], [CY, 686, 561, 598], [MG, 686, 598, 629], [CY, 687, 636, 739],
  [CY, 784, 340, 529], [MG, 785, 536, 561], [CY, 785, 561, 598], [MG, 785, 598, 629], [GR, 788, 332, 629],
  [CY, 782, 636, 739], [CY, 786, 636, 739], [GR, 784, 629, 746],
  [CY, 882, 340, 739], [CY, 885, 340, 739], [GR, 884, 332, 746],
  [CY, 981, 340, 739], [CY, 985, 340, 739], [GR, 983, 332, 746],
  [CY, 1081, 340, 739], [CY, 1085, 340, 739], [GR, 1083, 332, 746],
  [CY, 1181, 340, 739], [CY, 1184, 340, 739], [GR, 1183, 332, 746],
  [CY, 1280, 340, 739], [CY, 1284, 340, 739], [GR, 1282, 332, 746],
  [CY, 1380, 340, 529], [CY, 1384, 340, 529], [GR, 1382, 332, 536], [GR, 1378, 536, 746],
  [MG, 1381, 536, 562], [CY, 1381, 562, 601], [MG, 1381, 601, 629], [CY, 1382, 636, 739],
  [CY, 1479, 340, 529], [MG, 1480, 536, 566], [CY, 1480, 566, 601], [MG, 1480, 601, 629], [CY, 1479, 636, 739],
  [CY, 718, 530, 564], [GR, 719, 530, 564], [CY, 720, 530, 564],
  [CY, 748, 530, 564], [GR, 749, 530, 564], [CY, 750, 530, 564],
  [GR, 1418, 534, 569], [CY, 1419, 534, 569], [CY, 1421, 534, 569],
  [CY, 1449, 534, 569], [GR, 1450, 534, 569], [CY, 1452, 534, 569],
  [GR, 1418, 602, 636], [CY, 1419, 602, 636], [CY, 1421, 602, 636],
  [CY, 1449, 602, 636], [GR, 1450, 602, 636], [CY, 1452, 602, 636],
  [CY, 1411, 667, 702], [GR, 1413, 667, 702],
  [CY, 1440, 667, 702], [GR, 1442, 667, 702], [CY, 1443, 667, 702],
  [GR, 1470, 667, 702], [CY, 1473, 667, 702],
  [GR, 683, 332, 746], [GR, 1483, 332, 746],
];

// slab centre marks, one entry per row: [y, [x...]]
const marks = [
  [350, [735, 836, 933, 1033, 1133, 1232, 1332, 1432]],
  [384, [735, 836, 933, 1033, 1133, 1232, 1332, 1432]],
  [417, [836, 933, 1033, 1133, 1232, 1332]], [419, [735, 1432]],
  [450, [836, 933, 1033, 1133, 1232, 1332]], [452, [735, 1432]],
  [483, [735, 836, 933, 1033, 1133, 1232, 1332, 1432]],
  [514, [735]], [517, [836, 933, 1033, 1133, 1232, 1332, 1432]],
  [547, [701, 734, 768]], [550, [836, 933, 1033, 1133, 1232, 1330]], [553, [1399, 1435, 1467]],
  [580, [735, 836, 933, 1033, 1133, 1232]], [583, [1330]], [585, [1431]],
  [612, [735, 836]], [614, [933, 1033, 1133, 1232]], [617, [1330]], [619, [1399, 1435, 1467]],
  [648, [734, 834]], [650, [933, 1033, 1133, 1232, 1330]], [652, [1431]],
  [687, [734, 834, 933, 1033, 1133, 1232, 1330]], [685, [1396, 1428, 1456, 1477]],
  [726, [734, 834, 933, 1033, 1133, 1232, 1330]], [724, [1431]],
];

const colX = [684, 780, 880, 979, 1079, 1179, 1279, 1378, 1475];
const colY = [[333, 7], [429, 8], [529, 7], [629, 7], [738, 8]];

const Bubble = ({ x, y, label }) => (
  <g>
    <circle cx={x} cy={y} r="5" fill="none" stroke="#00ff00" />
    <text x={x} y={y + 3} textAnchor="middle" fontSize="9" fontWeight="bold" fill="#fff">{label}</text>
  </g>
);

const FloorPlan = () => (
  <g transform="translate(0.5 0.5)">
    <g shapeRendering="crispEdges" fill="none">
      <g stroke="#00c800">
        <path d="M683 242H1484M683 252H1484M683 813H1484M683 823H1484" />
        <path d="M611 332V746M621 332V746M1545 332V746M1555 332V746" />
      </g>
      {AX.map((x) => (
        <g key={x}>
          <path d={`M${x} 234V284M${x} 782V832`} stroke="#00ff00" />
          <path d={`M${x} 284V304M${x} 309V332M${x} 746V756M${x} 762V782`} stroke="#ff0000" />
        </g>
      ))}
      {AY.map(([n, y]) => (
        <g key={n}>
          <path d={`M603 ${y}H653M1514 ${y}H1564`} stroke="#00ff00" />
          <path d={`M653 ${y}H674M679 ${y}H690M1475 ${y}H1488M1493 ${y}H1514`} stroke="#ff0000" />
        </g>
      ))}
      <g stroke="#ff0000" strokeDasharray="24 6">
        <path d="M684 333H1482M684 745H1482M684 533H788M684 632H788M1378 533H1482M1378 632H1482" />
        <path d="M684 340V745M1482 340V745M784 536V632M1382 536V632" />
      </g>
      <g stroke="#1414ff">
        {colX.map((x, i) => colY.map(([y, h]) => (
          <rect key={`${x}-${y}`} x={x} y={y} width={i === 0 || i === 8 ? 7 : 8} height={h} />
        )))}
      </g>
      {hLines.map(([c, y, x1, x2], i) => <path key={i} d={`M${x1} ${y}H${x2}`} stroke={c} />)}
      {vLines.map(([c, x, y1, y2], i) => <path key={i} d={`M${x} ${y1}V${y2}`} stroke={c} />)}
      {marks.map(([y, xs]) => xs.map((x) => (
        <g key={`${x}-${y}`}>
          <path d={`M${x - 1.5} ${y}h3`} stroke="#ff0000" />
          <path d={`M${x} ${y - 1.5}v3`} stroke="#00ff00" />
        </g>
      )))}
    </g>
    {AX.map((x, i) => (
      <g key={x}>
        <Bubble x={x} y={228} label={i + 1} />
        <Bubble x={x} y={837} label={i + 1} />
      </g>
    ))}
    {AY.map(([n, y]) => (
      <g key={n}>
        <Bubble x={597} y={y} label={n} />
        <Bubble x={1569} y={y} label={n} />
      </g>
    ))}
    <g fontSize="4" fontWeight="bold" fill="#e0e0e0" stroke="#c0c0c0" strokeWidth=".4" textAnchor="middle">
      {AX.slice(1).map((x) => (
        <g key={x}>
          <text x={x - 50} y="250">8000</text>
          <text x={x - 50} y="811">8000</text>
        </g>
      ))}
      <text x="1083" y="240">64000</text>
      <text x="1083" y="821">64000</text>
      {[[384, '8000'], [483, '8000'], [582, '8000'], [688, '9000']].map(([y, t]) => (
        <g key={y}>
          <text transform={`translate(618 ${y}) rotate(-90)`}>{t}</text>
          <text transform={`translate(1543 ${y}) rotate(-90)`}>{t}</text>
        </g>
      ))}
      <text transform="translate(608 539) rotate(-90)">33000</text>
      <text transform="translate(1553 539) rotate(-90)">33000</text>
    </g>

    {/* UCS */}
    <g fill="none" shapeRendering="crispEdges">
      <path d="M684 646V695" stroke="#00ff00" />
      <path d="M681 650l3-4 4 4" stroke="#00ff00" />
      <path d="M684 695V745H735" stroke="#fff" />
      <path d="M735 745H782M779 748l4-3-2-3" stroke="#ff0000" />
      <rect x="680" y="740" width="9" height="9" stroke="#fff" />
    </g>
    <g fontSize="18">
      <g className="font-['Lato'] font-light" fill="#fff">
        <text x="687" y="690">Y</text>
        <text x="739" y="743">X</text>
      </g>
      <text x="683" y="635" fill="#00ff00">Y</text>
      <text x="793" y="744" fill="#e01010">X</text>
    </g>
  </g>
);

const ViewCube = () => (
  <div className="absolute top-[42px] right-[17px] w-[132px] flex flex-col items-center">
    <svg viewBox="0 0 132 132" className="w-[132px] h-[132px]">
      <circle cx="66" cy="64" r="53" fill="none" stroke="#434a52" strokeWidth="13" />
      <rect x="40" y="38" width="51" height="51" fill="#a9a9b2" stroke="#77787e" />
      <rect x="50" y="48" width="32" height="32" fill="#a2a2a8" />
      <g textAnchor="middle" fontSize="18" fill="#b4b6b8">
        <text x="66" y="15">北</text>
        <text x="66" y="129">南</text>
        <text x="9" y="71">西</text>
        <text x="122" y="71">东</text>
        <text x="66" y="76" fontSize="32" fontWeight="300" fill="#66676c">上</text>
      </g>
    </svg>
    <button className="mt-[19px] w-12 h-[17px] rounded border border-[#85808c] bg-[#9b9ba6] text-[#55555c] text-[11px] leading-[15px] flex items-center justify-center gap-[5px]">
      WCS
      <svg viewBox="0 0 10 6" className="w-2 h-[5px]"><path d="M1 .5h8L5 5z" fill="none" stroke="#77687c" /></svg>
    </button>
  </div>
);

const Canvas = () => (
  <main className="relative flex-1 min-h-0 overflow-hidden bg-[#222932]">
    <ViewCube />
    <svg
      className="absolute inset-0 w-full h-full pointer-events-none"
      viewBox="343 174 1575 744"
      preserveAspectRatio="xMinYMin meet"
    >
      <FloorPlan />
      <g transform="translate(0.5 0.5)" shapeRendering="crispEdges" stroke="#fff" fill="none">
        <path d="M455 174V375M455 389V918M342 382H448M462 382H1918" />
        <rect x="448" y="375" width="14" height="14" />
      </g>
      <g fontSize="18" fontWeight="300" fill="#f0f0f0" textAnchor="middle">
        <text x="1134" y="881">当前视图：体系0_天面层（楼层三维图）</text>
        <text x="1129" y="905">当前楼层：体系0_天面层(标准层RF)_H=30.000m</text>
      </g>
    </svg>
    <div className="relative flex justify-between text-[#dcdcdc]">
      <div className="pl-[3px] pt-[3px] leading-5 text-[13px] whitespace-nowrap">[−][俯视][二维线框]</div>
      <div className="flex items-center gap-[10px] pt-[7px] pr-[10px] h-[22px]">
        <button aria-label="最小化" className="w-[10px] h-3 border-b-[3px] border-white" />
        <button aria-label="还原">
          <svg viewBox="0 0 10 11" className="w-[10px] h-[11px]">
            <path d="M3 1h6v7M1 4h5v6H1z" fill="none" stroke="#f4f4f4" strokeWidth="1.5" />
          </svg>
        </button>
        <button aria-label="关闭视图"><X size={12} strokeWidth={5} className="text-[#f4f4f4]" /></button>
      </div>
    </div>
  </main>
);

const CommandLine = () => (
  <div className="h-[58px] shrink-0 border-t-[3px] border-[#3b4353] flex font-['Liberation_Mono','Noto_Sans_CJK_SC',monospace] text-[13px]">
    <div className="w-[25px] bg-[#2e3643] flex flex-col items-center pt-1 text-[#e4e4e4]">
      <svg viewBox="0 0 17 5" className="w-[17px] h-[5px]">
        <path d="M0 1h17M0 4h17" stroke="#d0d0d0" strokeWidth="2" strokeDasharray="2 1" />
      </svg>
      <button aria-label="关闭命令行" className="mt-1"><X size={14} strokeWidth={3} /></button>
      <button aria-label="自定义" className="mt-[9px]"><Wrench size={15} fill="#e4e4e4" strokeWidth={1} /></button>
    </div>
    <div className="flex-1 flex flex-col">
      <div className="flex-1 bg-[#c8c8c8] text-[#141414] pl-[2px] pt-[3px] leading-4">
        <p>命令:</p>
        <p>命令:</p>
      </div>
      <div className="h-5 border-t border-[#222932] bg-white flex items-center pl-1 text-[#5a5a5a]">
        <svg viewBox="0 0 16 12" className="w-4 h-3">
          <path d="M.5.5h15v11H.5z" fill="#fff" stroke="#5a5a5a" /><path d="M0 0h16v3H0z" fill="#5a5a5a" />
          <path d="M3 5l2 2-2 2M7 9h4" fill="none" stroke="#5a5a5a" />
        </svg>
        <Caret className="w-2 h-[5px] ml-[2px]" />
        <input aria-label="命令" placeholder="键入命令" className="flex-1 ml-[7px] italic outline-none placeholder:text-[#8a8a8a]" />
      </div>
    </div>
  </div>
);

const App = () => (
  <div className="h-screen flex flex-col overflow-hidden bg-[#222933] border-r-2 border-black text-xs font-['Noto_Sans','Noto_Sans_CJK_SC',sans-serif]">
    <header className="flex h-[114px] shrink-0">
      <Ribbon />
      <SidePanel />
    </header>
    <FileTabs />
    <div className="h-[5px] shrink-0 bg-[#3b4353] border-b border-black" />
    <QuickBar />
    <div className="h-1 shrink-0 bg-[#3b4353]" />
    <div className="flex-1 min-h-0 flex">
      <ViewPanel />
      <div className="flex-1 min-w-0 flex flex-col border-l-2 border-[#3b4353] font-['Liberation_Sans','Noto_Sans_CJK_SC',sans-serif]">
        <Canvas />
        <CommandLine />
      </div>
    </div>
  </div>
);

export default App;
